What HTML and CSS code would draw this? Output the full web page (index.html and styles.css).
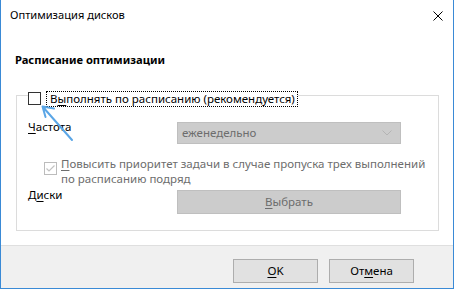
FILE: index.html
```html
<!DOCTYPE html>
<html lang="ru">
<head>
<meta charset="utf-8">
<title>Оптимизация дисков</title>
<link rel="stylesheet" href="styles.css">
</head>
<body>
<div class="window">
  <div class="titlebar">
    <span class="title">Оптимизация дисков</span>
    <svg class="close" width="10" height="10" viewBox="0 0 10 10"><path d="M0.5 0.5 L9.5 9.5 M9.5 0.5 L0.5 9.5" stroke="#000" stroke-width="1" fill="none"/></svg>
  </div>
  <div class="content">
    <div class="heading">Расписание оптимизации</div>
    <div class="group">
      <div class="group-head">
        <span class="cb"></span>
        <span class="focus">В<u>ы</u>полнять по расписанию (рекомендуется)</span>
      </div>
      <div class="row row-freq">
        <span class="label"><u>Ч</u>астота</span>
        <div class="select">
          <span>еженедельно</span>
          <svg class="chev" width="10" height="6" viewBox="0 0 10 6"><path d="M0.5 0.5 L5 5 L9.5 0.5" stroke="#b4b4b4" stroke-width="1" fill="none"/></svg>
        </div>
      </div>
      <div class="check-row">
        <span class="cb cb-dis"><svg width="11" height="11" viewBox="0 0 11 11"><path d="M1.5 5.5 L4 8 L9.5 2.5" stroke="#c2c2c2" stroke-width="1.2" fill="none"/></svg></span>
        <span class="check-text"><u>П</u>овысить приоритет задачи в случае пропуска трех выполнений<br>по расписанию подряд</span>
      </div>
      <div class="row row-disks">
        <span class="label">Д<u>и</u>ски</span>
        <div class="btn-dis"><u>В</u>ыбрать</div>
      </div>
    </div>
  </div>
  <div class="footer">
    <button class="btn"><u>O</u>K</button>
    <button class="btn">От<u>м</u>ена</button>
  </div>
  <svg class="arrow" width="40" height="40" viewBox="0 0 40 40">
    <path d="M2.5 2.5 L32 36 M2.5 2.5 L14 4.5 M2.5 2.5 L5.5 13" stroke="#5ba6e6" stroke-width="2" stroke-linecap="round" fill="none"/>
  </svg>
</div>
</body>
</html>
```
FILE: styles.css
```css
* { box-sizing: border-box; }
html, body { margin: 0; padding: 0; background: #fff; }
body {
  font-family: "Noto Sans", "Open Sans", sans-serif;
  font-size: 11.5px;
  line-height: 16px;
  color: #000;
}
u { text-decoration: underline; text-underline-offset: 2px; }
.window {
  position: relative;
  width: 454px;
  height: 289px;
  border-left: 1px solid #3a8ad6;
  border-right: 1px solid #3a8ad6;
  border-bottom: 1px solid #3a8ad6;
  display: flex;
  flex-direction: column;
  background: #fff;
}
.titlebar {
  height: 30px;
  display: flex;
  align-items: center;
  justify-content: space-between;
  padding: 0 10px 0 9px;
}
.title { font-size: 11.1px; }
.close { display: block; margin-top: 1px; }
.content {
  flex: 1;
  padding: 22px 0 0 14px;
}
.heading { font-weight: bold; font-size: 11.2px; }
.group {
  margin: 27px 0 0 1px;
  width: 423px;
  border: 1px solid #dcdcdc;
  padding: 0 0 16px 11px;
}
.group-head {
  display: flex;
  width: fit-content;
  align-items: flex-start;
  margin-top: -5px;
  background: #fff;
  height: 16px;
}
.cb {
  width: 13px;
  height: 13px;
  border: 1px solid #333;
  background: #fff;
  margin-top: 1px;
  display: flex;
  align-items: center;
  justify-content: center;
}
.focus {
  margin-left: 5px;
  height: 16px;
  padding: 0 2px 0 3px;
  outline: 1px dotted #000;
  outline-offset: -1px;
  border: 1px solid transparent;
  line-height: 14px;
  white-space: nowrap;
}
.row {
  display: grid;
  grid-template-columns: 149px 224px;
  align-items: start;
}
.row-freq { margin-top: 15px; }
.label { margin-top: -3px; }
.select {
  height: 22px;
  background: #cccccc;
  border: 1px solid #bfbfbf;
  color: #6d6d6d;
  padding: 0 4px 0 4px;
  display: flex;
  align-items: center;
  justify-content: space-between;
}
.chev { margin-right: 4px; }
.check-row {
  margin: 12px 0 0 16px;
  display: flex;
  align-items: flex-start;
  color: #6d6d6d;
  line-height: 15px;
}
.cb-dis {
  border-color: #bcbcbc;
  margin-top: 6px;
  flex: none;
}
.check-text { margin-left: 4px; white-space: nowrap; }
.row-disks { margin-top: 4px; }
.btn-dis {
  height: 24px;
  background: #cccccc;
  border: 1px solid #bfbfbf;
  color: #6d6d6d;
  display: flex;
  align-items: center;
  justify-content: center;
}
.footer {
  height: 43px;
  border-top: 1px solid #dfdfdf;
  background: #f0f0f0;
  display: flex;
  justify-content: flex-end;
  align-items: flex-start;
  gap: 11px;
  padding: 13px 39px 0 0;
}
.btn {
  width: 85px;
  height: 24px;
  background: #e1e1e1;
  border: 1px solid #adadad;
  font: inherit;
  color: #000;
  padding: 0;
}
.arrow {
  position: absolute;
  left: 39px;
  top: 104px;
}
```
